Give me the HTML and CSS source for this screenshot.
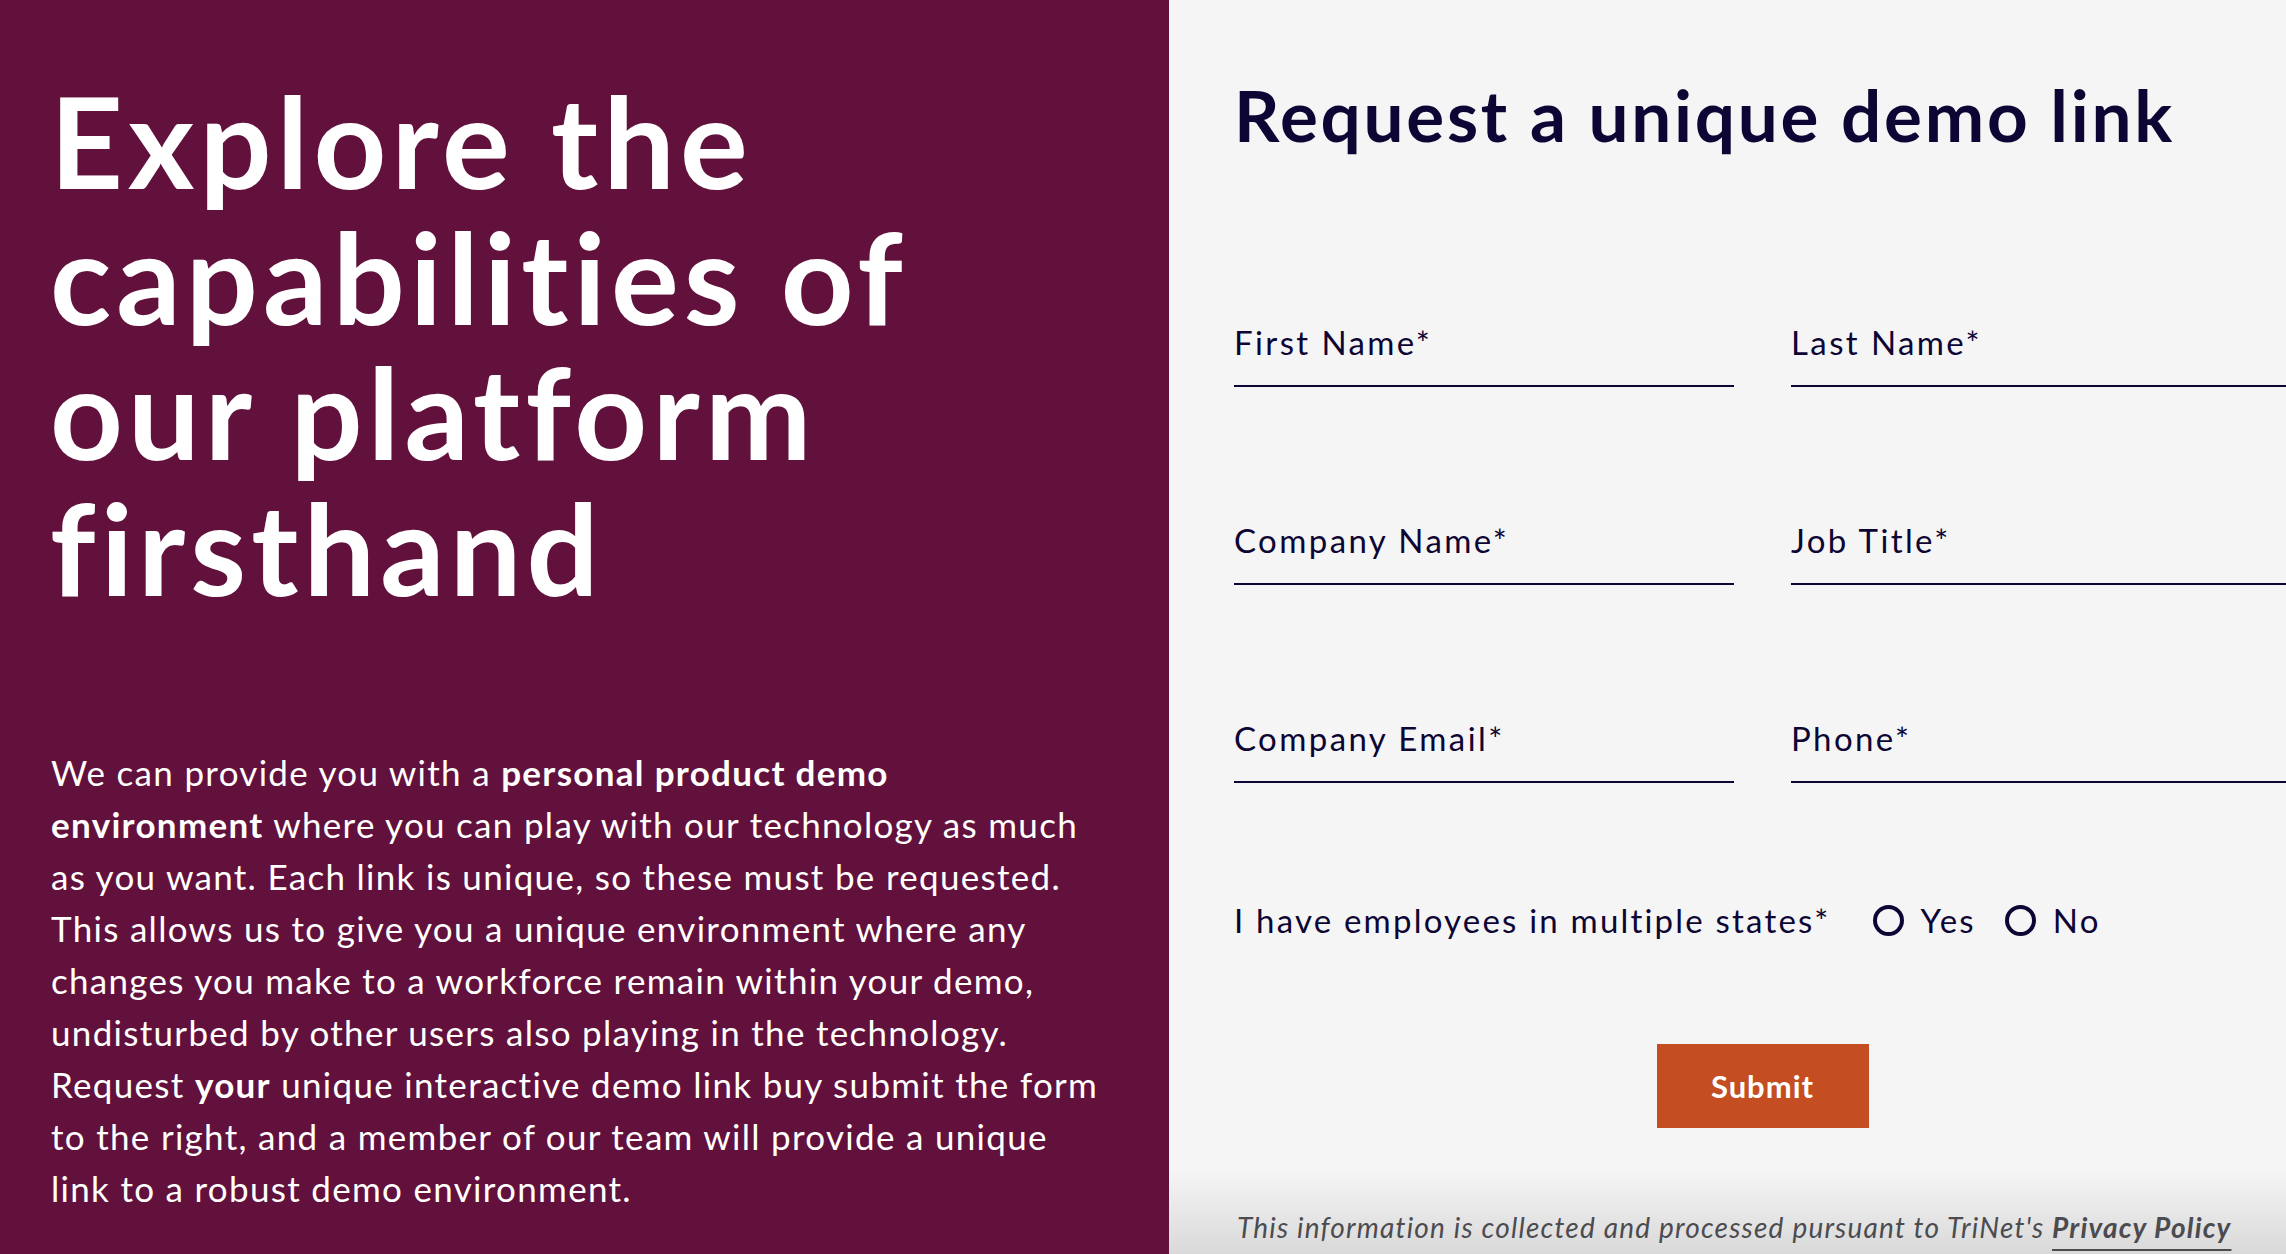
FILE: index.html
```html
<!DOCTYPE html>
<html lang="en">
<head>
<meta charset="utf-8">
<title>Request a unique demo link</title>
<link rel="stylesheet" href="styles.css">
</head>
<body>
<main class="page">
  <section class="intro">
    <h1 class="intro-title">Explore the<br>capabilities of<br>our platform<br>firsthand</h1>
    <p class="intro-text">We can provide you with a <strong>personal product demo</strong><br><strong>environment</strong> where you can play with our technology as much<br>as you want. Each link is unique, so these must be requested.<br>This allows us to give you a unique environment where any<br>changes you make to a workforce remain within your demo,<br>undisturbed by other users also playing in the technology.<br>Request <strong>your</strong> unique interactive demo link buy submit the form<br>to the right, and a member of our team will provide a unique<br>link to a robust demo environment.</p>
  </section>
  <section class="form-panel">
    <h2 class="form-title">Request a unique demo link</h2>
    <form class="demo-form">
      <div class="fields">
        <label class="field"><span class="field-label">First Name*</span><span class="field-input"></span></label>
        <label class="field"><span class="field-label">Last Name*</span><span class="field-input"></span></label>
        <label class="field"><span class="field-label">Company Name*</span><span class="field-input"></span></label>
        <label class="field"><span class="field-label">Job Title*</span><span class="field-input"></span></label>
        <label class="field"><span class="field-label">Company Email*</span><span class="field-input"></span></label>
        <label class="field"><span class="field-label">Phone*</span><span class="field-input"></span></label>
      </div>
      <div class="radio-row">
        <span class="radio-question">I have employees in multiple states*</span>
        <span class="radio-option"><span class="radio-circle"></span>Yes</span>
        <span class="radio-option"><span class="radio-circle"></span>No</span>
      </div>
      <div class="submit-row">
        <button type="button" class="submit-btn">Submit</button>
      </div>
    </form>
    <p class="legal">This information is collected and processed pursuant to TriNet's <a class="legal-link" href="#">Privacy Policy</a></p>
  </section>
</main>
</body>
</html>
```

FILE: styles.css
```css
html, body {
  margin: 0;
  padding: 0;
}
body {
  font-family: "Lato", "Liberation Sans", sans-serif;
  background: #f5f5f5;
  font-variant-ligatures: none;
}
.page {
  display: flex;
  width: 2286px;
  height: 1254px;
  overflow: hidden;
}
.intro {
  flex: 0 0 1169px;
  box-sizing: border-box;
  background: #62113c;
  color: #ffffff;
  padding: 73px 0 0 50px;
}
.intro-title {
  margin: 0;
  font-size: 127px;
  line-height: 135.7px;
  font-weight: 700;
  letter-spacing: 5.1px;
  white-space: nowrap;
}
.intro-text {
  margin: 130px 0 0 1px;
  font-size: 35px;
  line-height: 52px;
  font-weight: 400;
  letter-spacing: 1.3px;
  white-space: nowrap;
}
.intro-text strong {
  font-weight: 700;
}
.form-panel {
  flex: 1 1 auto;
  min-width: 0;
  box-sizing: border-box;
  padding: 72px 0 0 65px;
  color: #0d0533;
  background: linear-gradient(to bottom, #f5f5f5 0, #f5f5f5 1170px, #d9d9d9 1254px);
}
.form-title {
  margin: 0;
  font-size: 71px;
  line-height: 85px;
  font-weight: 700;
  letter-spacing: 2.7px;
  white-space: nowrap;
}
.demo-form {
  width: 1057px;
  margin-top: 165px;
}
.fields {
  display: grid;
  grid-template-columns: 500px 500px;
  column-gap: 57px;
  row-gap: 133px;
}
.field {
  display: flex;
  flex-direction: column;
}
.field-label {
  font-size: 33px;
  line-height: 40px;
  letter-spacing: 2.4px;
  white-space: nowrap;
}
.field-input {
  display: block;
  height: 23px;
  border-bottom: 2px solid #0d0533;
}
.radio-row {
  display: flex;
  align-items: center;
  margin-top: 117px;
  font-size: 33px;
  line-height: 40px;
  letter-spacing: 2.2px;
  white-space: nowrap;
}
.radio-question {
  margin-right: 42px;
}
.radio-option {
  display: flex;
  align-items: center;
  gap: 17px;
  margin-right: 29px;
}
.radio-circle {
  display: block;
  width: 31px;
  height: 31px;
  box-sizing: border-box;
  border: 4px solid #0d0533;
  border-radius: 50%;
}
.submit-row {
  display: flex;
  justify-content: center;
  margin-top: 104px;
}
.submit-btn {
  width: 212px;
  height: 84px;
  border: 0;
  background: #c44d22;
  color: #ffffff;
  font-family: "Lato", "Liberation Sans", sans-serif;
  font-size: 31px;
  font-weight: 700;
  letter-spacing: 1px;
  padding: 0;
}
.legal {
  margin: 82px 0 0 3px;
  font-size: 28px;
  line-height: 34px;
  font-style: italic;
  letter-spacing: 1.2px;
  color: #4b4b50;
  white-space: nowrap;
}
.legal-link {
  color: #4b4b50;
  font-weight: 700;
  text-decoration: underline;
  text-decoration-thickness: 2px;
  text-underline-offset: 11px;
}
```
